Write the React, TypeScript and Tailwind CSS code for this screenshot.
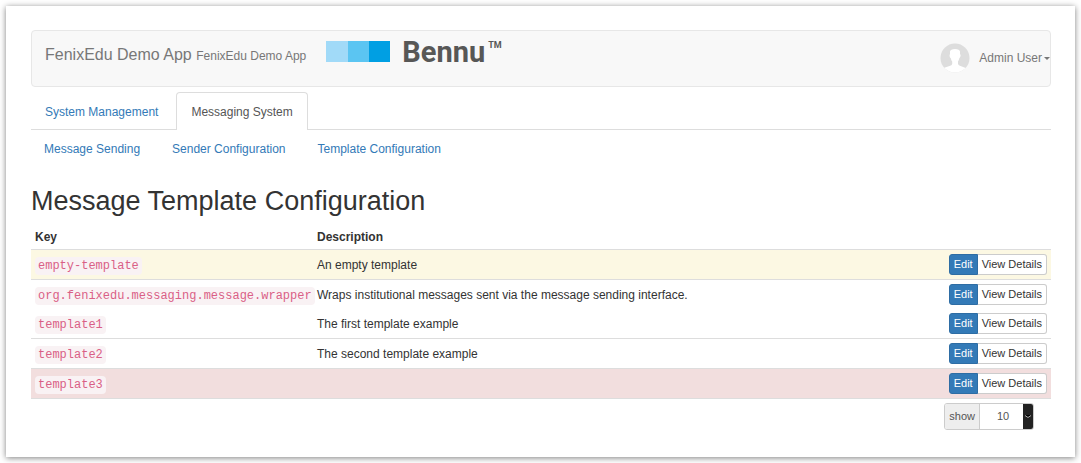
const templates = [
  { key: 'empty-template', description: 'An empty template', row: 'border-t border-[#ddd] bg-[#fcf8e3]' },
  {
    key: 'org.fenixedu.messaging.message.wrapper',
    description: 'Wraps institutional messages sent via the message sending interface.',
    row: 'border-t border-[#ddd]',
  },
  { key: 'template1', description: 'The first template example', row: '' },
  { key: 'template2', description: 'The second template example', row: 'border-t border-[#ddd]' },
  { key: 'template3', description: '', row: 'border-y border-[#ddd] bg-[#f2dede]' },
];

function BennuLogo() {
  return (
    <div className="flex items-start font-[Roboto,sans-serif] font-bold text-[#575756]">
      <svg viewBox="0 0 64 21" className="mt-[3px] h-[21px] w-[64px]" aria-hidden="true">
        <rect x="0" y="0" width="22" height="21" fill="#a1daf8" />
        <rect x="22" y="0" width="21" height="21" fill="#5bc5f2" />
        <rect x="43" y="0" width="21" height="21" fill="#009fe3" />
      </svg>
      <span className="ml-3 text-[29px] leading-[28px]">Bennu</span>
      <span className="ml-[3px] pt-px text-[9px] leading-[12px]">TM</span>
    </div>
  );
}

function Avatar() {
  return (
    <svg viewBox="0 0 30 30" className="h-[30px] w-[30px]" aria-hidden="true">
      <defs>
        <clipPath id="avatar-circle">
          <circle cx="15" cy="15" r="14.5" />
        </clipPath>
      </defs>
      <g clipPath="url(#avatar-circle)">
        <rect width="30" height="30" fill="#ddd" />
        <path
          d="M10 8.500Q10.500 6 15 6T20 8.500L20 11.300Q21 11.500 20.500 13.300Q20 15 19.300 15.300Q18.800 17.800 18 18.600V21Q18.500 22.300 20.500 23.100L27 25.600V30H2V25.600L9.500 23.100Q12 22.300 12.200 21V18.600Q11.200 17.600 10.800 15.300Q9.800 15 9.600 13.300Q9.300 11.500 10 11.300Z"
          fill="#fff"
        />
      </g>
    </svg>
  );
}

export default function App() {
  return (
    <div className="p-1.5 font-['Liberation_Sans',Arial,sans-serif] text-[12px] leading-[18px] text-[#333]">
      <main className="bg-white pt-6 pr-6 pb-[27px] pl-[25px] shadow-[0_1px_6px_rgba(0,0,0,0.5)]">
        <header className="flex h-[57px] items-start justify-between rounded border border-[#e7e7e7] bg-[#f8f8f8] pl-[13px] text-[#777]">
          <div className="flex items-start gap-5 pt-[7px]">
            <a href="#" className="pt-[8px] text-[16px]">
              FenixEdu Demo App <small className="text-[12px]">FenixEdu Demo App</small>
            </a>
            <BennuLogo />
          </div>
          <button type="button" className="flex items-center gap-[9px] pt-[12px]">
            <Avatar />
            <span className="flex items-center gap-0.5">
              Admin User
              <svg viewBox="0 0 6 3" className="h-[3px] w-[6px]" aria-hidden="true">
                <path d="M0 0H6L3 3Z" fill="#777" />
              </svg>
            </span>
          </button>
        </header>

        <nav aria-label="Modules" className="mt-[5px] flex border-b border-[#ddd] text-[#337ab7]">
          <a href="#" className="border border-transparent pt-[10px] pr-[17px] pb-[7px] pl-[13px]">
            System Management
          </a>
          <a
            href="#"
            aria-current="page"
            className="-mb-px rounded-t border border-b-0 border-[#ddd] bg-white px-[14px] pt-[10px] pb-[9px] text-[#555]"
          >
            Messaging System
          </a>
        </nav>

        <nav aria-label="Messaging" className="flex gap-8 px-[13px] pt-[10px] text-[#337ab7]">
          <a href="#">Message Sending</a>
          <a href="#">Sender Configuration</a>
          <a href="#">Template Configuration</a>
        </nav>

        <h1 className="mt-[28px] text-[27px] leading-[30px]">Message Template Configuration</h1>

        <table className="mt-[9px] w-full table-fixed border-collapse">
          <thead>
            <tr className="h-[24px] text-left">
              <th className="w-[282px] px-1 pt-px">Key</th>
              <th className="px-1 pt-px">Description</th>
              <th className="w-[112px] px-1" aria-label="Actions" />
            </tr>
          </thead>
          <tbody>
            {templates.map((t) => (
              <tr key={t.key} className={t.row}>
                <td className="px-1 pt-[4px]">
                  <code className="block w-fit rounded bg-[#f9f2f4] px-[3px] font-['Liberation_Mono','Courier_New',monospace] text-[12px] leading-[18px] text-[#d95f86]">
                    {t.key}
                  </code>
                </td>
                <td className="px-1 pt-0.5">{t.description}</td>
                <td className="px-1 py-[4px]">
                  <div className="flex justify-end text-[11px] leading-[19px]">
                    <button type="button" className="rounded-l-[3px] border border-[#2e6da4] bg-[#337ab7] px-1 text-white">
                      Edit
                    </button>
                    <button type="button" className="rounded-r-[3px] border border-l-0 border-[#ccc] bg-white px-1 whitespace-nowrap">
                      View Details
                    </button>
                  </div>
                </td>
              </tr>
            ))}
          </tbody>
        </table>

        <div className="mt-1 mr-[17px] flex justify-end text-[11px] text-[#555]">
          <div className="flex h-[27px] overflow-hidden rounded-[3px] border border-[#ccc]">
            <label htmlFor="page-size" className="flex items-center border-r border-[#ccc] bg-[#eee] px-1">
              show
            </label>
            <div className="flex">
              <select id="page-size" defaultValue="10" className="w-[43px] appearance-none bg-white pl-[17px]">
                <option>10</option>
                <option>25</option>
                <option>50</option>
              </select>
              <svg viewBox="0 0 10 25" className="h-[25px] w-[10px] bg-[#222]" aria-hidden="true">
                <path d="M2 11H8L5 14Z" fill="#000" />
                <path d="M2 11.500L5 13.500L8 11.500" fill="none" stroke="#aaa" />
              </svg>
            </div>
          </div>
        </div>
      </main>
    </div>
  );
}
